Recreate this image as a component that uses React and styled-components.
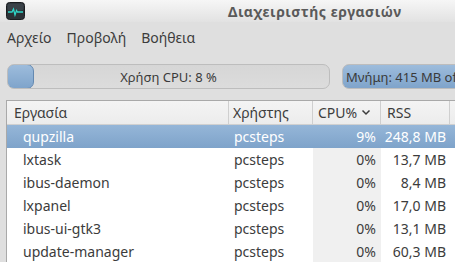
import React from "react";
import styled, { createGlobalStyle } from "styled-components";

const Global = createGlobalStyle`
  html, body { margin: 0; padding: 0; background: #dfdfdf; overflow: hidden; }
  body { font-family: "Noto Sans", "DejaVu Sans", sans-serif; }
`;

const Window = styled.div`
  width: 700px;
  height: 262px;
  background: #dfdfdf;
  display: flex;
  flex-direction: column;
  overflow: hidden;
`;

const TitleBar = styled.div`
  height: 22px;
  flex: none;
  display: flex;
  align-items: center;
  background: linear-gradient(#f6f6f6, #e2e2e2);
`;

const AppIcon = styled.svg`
  margin-left: 6px;
  width: 19px;
  height: 18px;
`;

const Title = styled.div`
  margin-left: 203px;
  font-size: 14px;
  font-weight: 700;
  color: #5a5a5a;
  letter-spacing: 0.55px;
`;

const MenuBar = styled.div`
  height: 31px;
  flex: none;
  display: flex;
  align-items: center;
  padding-left: 7px;
  gap: 15px;
`;

const MenuItem = styled.span`
  font-size: 14px;
  color: #3c3c3c;
`;

const Meters = styled.div`
  display: flex;
  gap: 12px;
  padding: 11px 0 0 7px;
  height: 25px;
  flex: none;
`;

const Trough = styled.div`
  position: relative;
  width: ${(p) => p.$w}px;
  height: 25px;
  box-sizing: border-box;
  border: 1px solid #bdbdbd;
  border-radius: 7px;
  background: linear-gradient(#d6d6d6, #dcdcdc);
  overflow: hidden;
  display: flex;
  align-items: center;
  justify-content: ${(p) => (p.$left ? "flex-start" : "center")};
  padding-left: ${(p) => (p.$left ? "3px" : "0")};
`;

const Fill = styled.div`
  position: absolute;
  left: -1px;
  top: -1px;
  bottom: -1px;
  box-sizing: border-box;
  border: 1px solid #6489b1;
  border-radius: 7px;
  background: linear-gradient(#9dbcdc, #7fa4cb);
`;

const MeterText = styled.span`
  position: relative;
  font-size: 13px;
  color: #3a3a3a;
  white-space: nowrap;
`;

const Tree = styled.div`
  margin: 11px 0 0 6px;
  border-left: 1px solid #a9a9a9;
  border-top: 1px solid #a9a9a9;
  background: #ffffff;
  flex: 1;
  display: flex;
  flex-direction: column;
`;

const cols = "222px 84px 68px 69px 1fr";

const Header = styled.div`
  display: grid;
  grid-template-columns: ${cols};
  height: 24px;
  background: linear-gradient(#f4f4f4, #ececec);
  border-bottom: 1px solid #d0d0d0;
  box-sizing: border-box;
`;

const HeadCell = styled.div`
  display: flex;
  align-items: center;
  padding-left: ${(p) => p.$pad}px;
  border-right: 1px solid #cfcfcf;
  font-size: 14px;
  color: #3c3c3c;
  gap: 4px;
`;

const Row = styled.div`
  display: grid;
  grid-template-columns: ${cols};
  height: 23px;
  background: ${(p) =>
    p.$selected ? "linear-gradient(#95b6d8, #7ea3ca)" : "#ffffff"};
  color: ${(p) => (p.$selected ? "#ffffff" : "#3c3c3c")};
`;

const Cell = styled.div`
  display: flex;
  align-items: center;
  font-size: 14px;
  justify-content: ${(p) => (p.$right ? "flex-end" : "flex-start")};
  padding-left: ${(p) => p.$pl || 0}px;
  padding-right: ${(p) => p.$pr || 0}px;
  background: ${(p) => (p.$sorted && !p.$selected ? "#f0f0f0" : "transparent")};
  white-space: nowrap;
`;

const rows = [
  ["qupzilla", "pcsteps", "9%", "248,8 MB"],
  ["lxtask", "pcsteps", "0%", "13,7 MB"],
  ["ibus-daemon", "pcsteps", "0%", "8,4 MB"],
  ["lxpanel", "pcsteps", "0%", "17,0 MB"],
  ["ibus-ui-gtk3", "pcsteps", "0%", "13,1 MB"],
  ["update-manager", "pcsteps", "0%", "60,3 MB"],
];

export default function App() {
  return (
    <Window>
      <Global />
      <TitleBar>
        <AppIcon viewBox="0 0 19 18">
          <rect x="0.5" y="0.5" width="18" height="17" rx="3" fill="#2b3136" stroke="#1a1d20" />
          <rect x="1.5" y="1.5" width="16" height="7" rx="2" fill="#3a4248" />
          <path d="M2 10 H6 L7.5 7 L9 13 L10.5 8.5 L11.5 10 H17" stroke="#2fd6c8" strokeWidth="1.3" fill="none" />
        </AppIcon>
        <Title>Διαχειριστής εργασιών</Title>
      </TitleBar>
      <MenuBar>
        <MenuItem>Αρχείο</MenuItem>
        <MenuItem>Προβολή</MenuItem>
        <MenuItem>Βοήθεια</MenuItem>
      </MenuBar>
      <Meters>
        <Trough $w={323}>
          <Fill style={{ width: "27px" }} />
          <MeterText>Χρήση CPU: 8 %</MeterText>
        </Trough>
        <Trough $w={323} $left>
          <Fill style={{ width: "140px" }} />
          <MeterText>Μνήμη: 415 MB of 1,9 GB</MeterText>
        </Trough>
      </Meters>
      <Tree>
        <Header>
          <HeadCell $pad={7}>Εργασία</HeadCell>
          <HeadCell $pad={4}>Χρήστης</HeadCell>
          <HeadCell $pad={5}>
            CPU%
            <svg width="10" height="7" viewBox="0 0 10 7">
              <path d="M1.5 1.5 L5 5 L8.5 1.5" stroke="#3c3c3c" strokeWidth="1.5" fill="none" />
            </svg>
          </HeadCell>
          <HeadCell $pad={6}>RSS</HeadCell>
          <HeadCell $pad={6} />
        </Header>
        {rows.map((r, i) => {
          const sel = i === 0;
          return (
            <Row key={r[0]} $selected={sel}>
              <Cell $pl={16}>{r[0]}</Cell>
              <Cell $pl={5}>{r[1]}</Cell>
              <Cell $right $pr={5} $sorted $selected={sel}>{r[2]}</Cell>
              <Cell $right $pr={4}>{r[3]}</Cell>
              <Cell />
            </Row>
          );
        })}
      </Tree>
    </Window>
  );
}
